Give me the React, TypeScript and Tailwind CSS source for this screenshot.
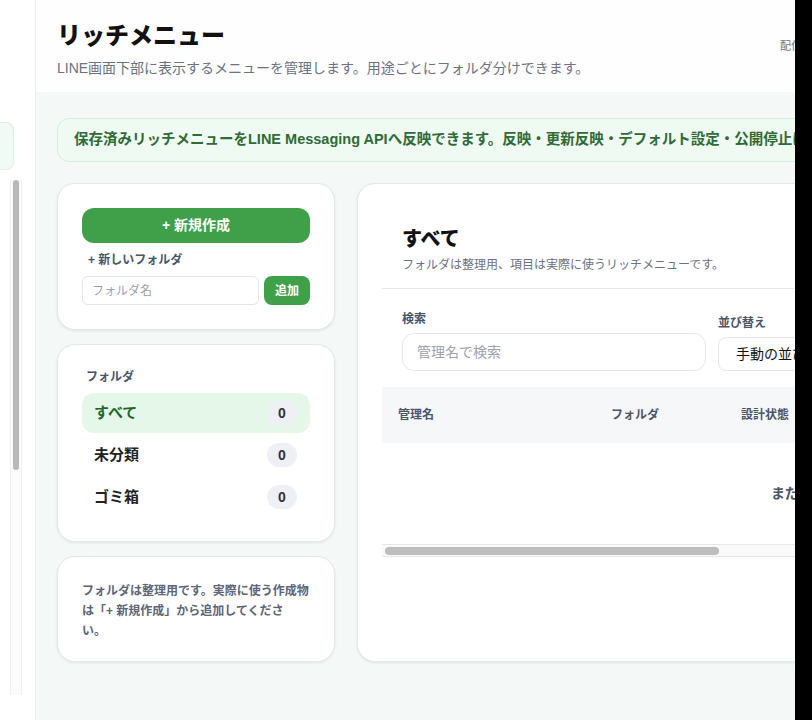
import React from "react";

const font = { fontFamily: '"Liberation Sans", "Noto Sans CJK JP", "Noto Sans", sans-serif' };

export default function App() {
  return (
    <div className="flex h-[720px] w-[812px] overflow-hidden bg-black" style={font}>
      <div className="flex h-full w-[795px] shrink-0 overflow-hidden bg-white">
        {/* sidebar */}
        <div className="flex h-full w-[36px] shrink-0 flex-col border-r border-[#e9eeeb] bg-white">
          <div className="mt-[122px] h-[48px] w-[14px] rounded-r-lg border border-l-0 border-[#dcefe2] bg-[#f1faf4]" />
          <div className="ml-[10px] mt-[10px] flex h-[515px] w-[12px] flex-col border-x border-[#efefef] bg-[#fbfbfb] px-[2px]">
            <div className="h-[290px] w-full rounded-full bg-[#b9b9b9]" />
          </div>
        </div>

        {/* main */}
        <div className="flex h-full w-[760px] shrink-0 flex-col overflow-hidden bg-[#f4f8f6]">
          <div className="flex h-[92px] shrink-0 bg-[#fdfefd] pl-[21px]">
            <div className="w-[723px] shrink-0 pt-[20px]">
              <div className="text-[24px] font-black leading-[32px] text-[#111]">リッチメニュー</div>
              <div className="mt-[6px] text-[14px] leading-[20px] text-[#6b7280]">
                LINE画面下部に表示するメニューを管理します。用途ごとにフォルダ分けできます。
              </div>
            </div>
            <div className="shrink-0 whitespace-nowrap pt-[38px] text-[11px] leading-[16px] text-[#6b7280]">配信状況</div>
          </div>

          <div className="pl-[21px] pt-[26px]">
            <div className="flex h-[44px] w-[780px] items-center overflow-hidden rounded-xl border border-[#d5ecdc] bg-[#effaf2] pl-[16px]">
              <span className="whitespace-nowrap text-[14.5px] font-bold text-[#2f6b36]">
                保存済みリッチメニューをLINE Messaging APIへ反映できます。反映・更新反映・デフォルト設定・公開停止は詳細画面から行えます。
              </span>
            </div>

            <div className="mt-[21px] flex gap-[22px]">
              {/* left column */}
              <div className="flex w-[278px] shrink-0 flex-col gap-[14px]">
                <div className="rounded-[18px] border border-[#e3e9e5] bg-white px-6 pb-[24px] pt-6 shadow-[0_1px_3px_rgba(0,0,0,0.08)]">
                  <div className="flex h-[35px] items-center justify-center rounded-xl bg-[#40a04a] text-[14px] font-bold text-white">
                    + 新規作成
                  </div>
                  <div className="mt-[8px] pl-[6px] text-[12px] font-bold leading-[18px] text-[#4b5568]">+ 新しいフォルダ</div>
                  <div className="mt-[7px] flex gap-[5px]">
                    <div className="flex h-[29px] w-[177px] items-center rounded-md border border-[#e2e5e9] bg-white pl-[9px] text-[12px] text-[#9aa1ab]">
                      フォルダ名
                    </div>
                    <div className="flex h-[29px] flex-1 items-center justify-center rounded-lg bg-[#40a04a] text-[12px] font-bold text-white">
                      追加
                    </div>
                  </div>
                </div>

                <div className="rounded-[18px] border border-[#e3e9e5] bg-white px-6 pb-6 pt-6 shadow-[0_1px_3px_rgba(0,0,0,0.08)]">
                  <div className="pl-[4px] text-[12px] font-bold leading-[16px] text-[#4b5568]">フォルダ</div>
                  <div className="mt-[8px] flex flex-col gap-[2px]">
                    {[
                      ["すべて", true],
                      ["未分類", false],
                      ["ゴミ箱", false],
                    ].map(([name, active]) => (
                      <div
                        key={name as string}
                        className={
                          active
                            ? "flex h-[40px] items-center justify-between rounded-xl bg-[#e4f7e8] pl-[12px] pr-[13px]"
                            : "flex h-[40px] items-center justify-between rounded-xl pl-[12px] pr-[13px]"
                        }
                      >
                        <span className={active ? "text-[15px] font-bold text-[#22662c]" : "text-[15px] font-bold text-[#222]"}>
                          {name}
                        </span>
                        <span className="flex h-[24px] w-[30px] items-center justify-center rounded-full bg-[#eef0f5] text-[14px] font-bold text-[#333]">
                          0
                        </span>
                      </div>
                    ))}
                  </div>
                </div>

                <div className="flex-1 rounded-[18px] border border-[#e3e9e5] bg-white px-6 pt-[24px] shadow-[0_1px_3px_rgba(0,0,0,0.08)]">
                  <div className="whitespace-nowrap text-[12px] font-bold leading-[20px] text-[#5d6676]">
                    フォルダは整理用です。実際に使う作成物
                    <br />
                    は「+ 新規作成」から追加してくださ
                    <br />
                    い。
                  </div>
                </div>
              </div>

              {/* right card */}
              <div className="h-[479px] w-[520px] shrink-0 rounded-[18px] border border-[#e3e9e5] bg-white p-6 shadow-[0_1px_3px_rgba(0,0,0,0.08)]">
                <div className="border-b border-[#e6e8eb] px-5 pb-[14px] pt-[17px]">
                  <div className="text-[20px] font-black leading-[28px] text-[#111]">すべて</div>
                  <div className="mt-[3px] text-[12px] leading-[18px] text-[#6b7280]">
                    フォルダは整理用、項目は実際に使うリッチメニューです。
                  </div>
                </div>
                <div className="flex items-end gap-[12px] px-5 pt-[22px]">
                  <div className="flex w-[304px] shrink-0 flex-col">
                    <div className="text-[12px] font-bold leading-[16px] text-[#4b5568]">検索</div>
                    <div className="mt-[6px] flex h-[38px] items-center rounded-xl border border-[#e5e7eb] pl-[14px] text-[14px] text-[#9ca3af]">
                      管理名で検索
                    </div>
                  </div>
                  <div className="flex w-[140px] shrink-0 flex-col">
                    <div className="text-[12px] font-bold leading-[16px] text-[#4b5568]">並び替え</div>
                    <div className="mt-[6px] flex h-[34px] items-center rounded-lg border border-[#e5e7eb] pl-[17px] text-[14px] text-[#111] whitespace-nowrap">
                      手動の並び替え
                    </div>
                  </div>
                </div>
                <div className="mt-[16px] overflow-hidden">
                  <div className="flex h-[56px] items-center bg-[#f5f7f9] text-[12px] font-bold text-[#4b5568]">
                    <div className="w-[229px] shrink-0 pl-[16px]">管理名</div>
                    <div className="w-[130px] shrink-0">フォルダ</div>
                    <div className="w-[120px] shrink-0">設計状態</div>
                  </div>
                  <div className="flex h-[101px] items-center pl-[389px] text-[14px] font-bold text-[#4b5568] whitespace-nowrap">
                    まだリッチメニューがありません
                  </div>
                  <div className="flex h-[13px] items-center border-y border-[#e8e8e8] bg-[#fafafa] px-[3px]">
                    <div className="h-[8px] w-[334px] rounded-full bg-[#bdbdbd]" />
                  </div>
                </div>
              </div>
            </div>
          </div>
        </div>
      </div>
      <div className="flex-1 bg-black" />
    </div>
  );
}
